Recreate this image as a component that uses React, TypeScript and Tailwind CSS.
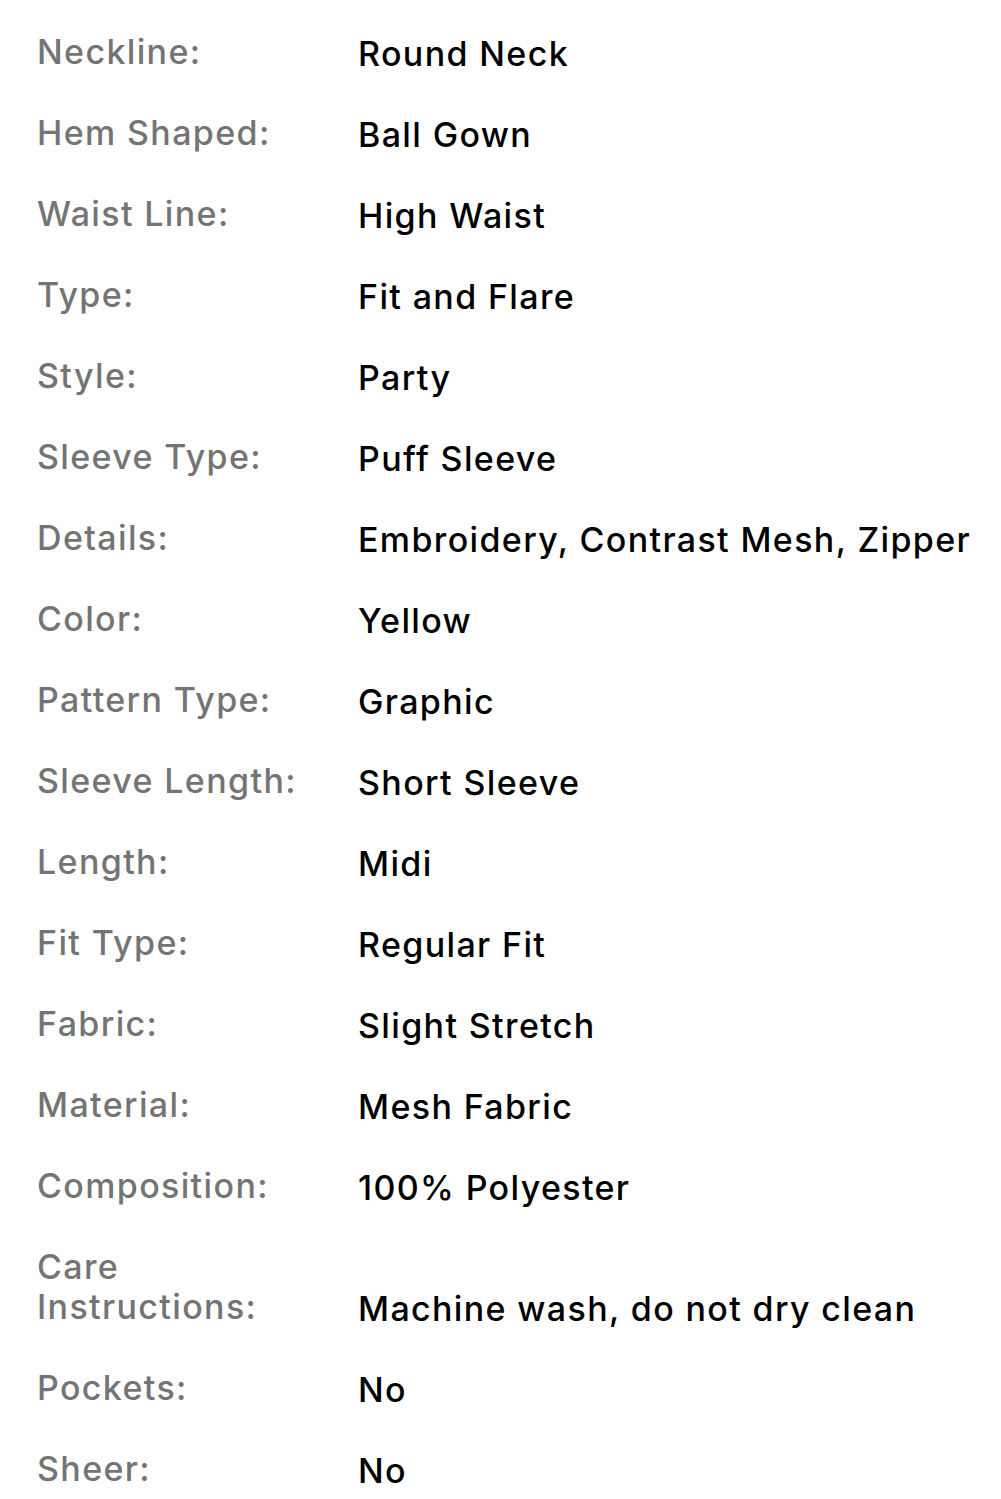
const specs: [string, string][] = [
  ['Neckline:', 'Round Neck'],
  ['Hem Shaped:', 'Ball Gown'],
  ['Waist Line:', 'High Waist'],
  ['Type:', 'Fit and Flare'],
  ['Style:', 'Party'],
  ['Sleeve Type:', 'Puff Sleeve'],
  ['Details:', 'Embroidery, Contrast Mesh, Zipper'],
  ['Color:', 'Yellow'],
  ['Pattern Type:', 'Graphic'],
  ['Sleeve Length:', 'Short Sleeve'],
  ['Length:', 'Midi'],
  ['Fit Type:', 'Regular Fit'],
  ['Fabric:', 'Slight Stretch'],
  ['Material:', 'Mesh Fabric'],
  ['Composition:', '100% Polyester'],
  ['Care Instructions:', 'Machine wash, do not dry clean'],
  ['Pockets:', 'No'],
  ['Sheer:', 'No'],
];

export default function App() {
  return (
    <div
      className="min-h-screen bg-white pt-[32px] pl-[37px]"
      style={{ fontFamily: 'Inter, "Noto Sans", sans-serif' }}
    >
      <div className="grid grid-cols-[321px_1fr] gap-y-[39px] text-[34px] leading-[40px] font-medium tracking-[0.04em]">
        {specs.map(([label, value]) => (
          <div key={label} className="contents">
            <div className="flex items-end pb-[2px] text-[#747474]">
              <span className="w-[285px]">{label}</span>
            </div>
            <div className="flex items-end whitespace-nowrap text-black">{value}</div>
          </div>
        ))}
      </div>
    </div>
  );
}
